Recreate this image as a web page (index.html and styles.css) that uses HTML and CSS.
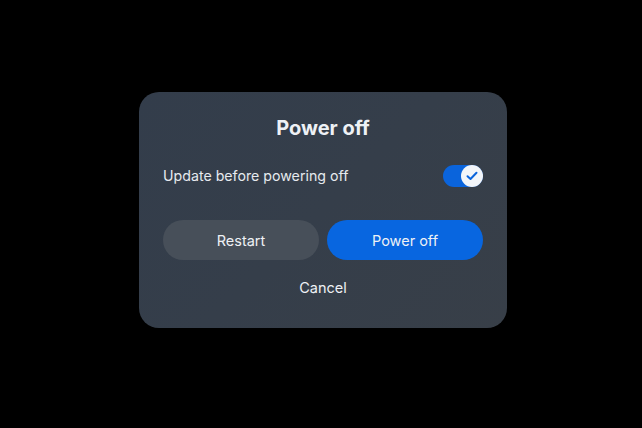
FILE: index.html
```html
<!DOCTYPE html>
<html>
<head>
<meta charset="utf-8">
<link rel="stylesheet" href="styles.css">
</head>
<body>
<div class="screen">
  <div class="dialog">
    <div class="title">Power off</div>
    <div class="row">
      <span class="label">Update before powering off</span>
      <div class="toggle">
        <div class="knob">
          <svg width="12" height="10" viewBox="0 0 12 10"><path d="M1.5 5.2 L4.5 8 L10.5 1.8" fill="none" stroke="#0a64dc" stroke-width="2" stroke-linecap="round" stroke-linejoin="round"/></svg>
        </div>
      </div>
    </div>
    <div class="buttons">
      <button class="btn secondary">Restart</button>
      <button class="btn primary">Power off</button>
    </div>
    <div class="cancel">Cancel</div>
  </div>
</div>
</body>
</html>
```
FILE: styles.css
```css
html, body {
  margin: 0;
  padding: 0;
  background: #000;
}
.screen {
  width: 642px;
  height: 428px;
  display: flex;
  align-items: center;
  justify-content: center;
  font-family: Inter, "Noto Sans", sans-serif;
  color: #eef1f5;
}
.dialog {
  width: 368px;
  box-sizing: border-box;
  margin: 0 0 8px 4px;
  padding: 24px 24px 28px;
  border-radius: 20px;
  background: linear-gradient(135deg, #333d4b 0%, #353e4a 50%, #383f48 100%);
  display: flex;
  flex-direction: column;
}
.title {
  text-align: center;
  font-size: 20px;
  font-weight: 700;
  line-height: 24px;
  height: 24px;
}
.row {
  margin-top: 24px;
  height: 24px;
  display: flex;
  align-items: center;
  justify-content: space-between;
}
.label {
  font-size: 14.2px;
  line-height: 24px;
  color: #e6eaef;
}
.toggle {
  width: 40px;
  height: 22px;
  border-radius: 11px;
  background: #0a64dc;
  display: flex;
  align-items: center;
  justify-content: flex-end;
}
.knob {
  width: 22px;
  height: 22px;
  border-radius: 50%;
  background: #f2f5f9;
  display: flex;
  align-items: center;
  justify-content: center;
}
.buttons {
  margin-top: 32px;
  display: flex;
  gap: 8px;
}
.btn {
  flex: 1;
  height: 40px;
  border: none;
  border-radius: 20px;
  font-family: Inter, "Noto Sans", sans-serif;
  font-size: 14.5px;
  color: #eef1f5;
  padding: 0;
}
.secondary {
  background: #474f59;
}
.primary {
  background: #0866e0;
}
.cancel {
  margin-top: 16px;
  text-align: center;
  font-size: 14.5px;
  line-height: 24px;
}
```
